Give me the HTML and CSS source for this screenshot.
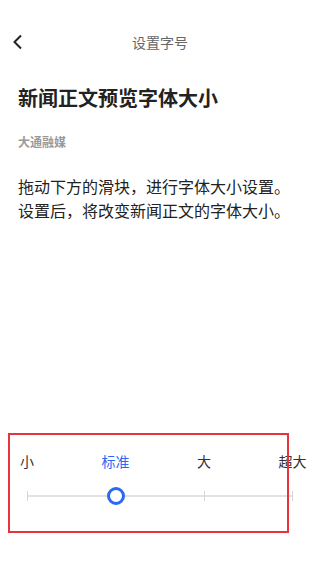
FILE: index.html
```html
<!DOCTYPE html>
<html lang="zh">
<head>
    <meta charset="utf-8">
    <link rel="stylesheet" href="styles.css">
</head>
<body>
<div class="page">
    <div class="topbar">
        <span class="back">
            <svg width="12" height="16" viewBox="0 0 12 16"><path d="M9 1.5 L2.5 8 L9 14.5" fill="none" stroke="#222" stroke-width="2"/></svg>
        </span>
        <span class="toptitle">设置字号</span>
    </div>
    <div class="content">
        <h2 class="headline">新闻正文预览字体大小</h2>
        <div class="source">大通融媒</div>
        <p class="bodytext">拖动下方的滑块，进行字体大小设置。<br>设置后，将改变新闻正文的字体大小。</p>
    </div>
    <div class="sizer">
        <div class="labels">
            <span>小</span>
            <span class="active">标准</span>
            <span>大</span>
            <span>超大</span>
        </div>
        <div class="track">
            <div class="line"></div>
            <i class="tick t0"></i>
            <i class="tick t1"></i>
            <i class="tick t2"></i>
            <i class="tick t3"></i>
            <div class="thumb"></div>
        </div>
        <div class="markbox"></div>
    </div>
</div>
</body>
</html>
```

FILE: styles.css
```css
body {
    margin: 0;
    background: #fff;
    font-family: "Noto Sans CJK SC", "Noto Sans", sans-serif;
    color: #222;
}

.page {
    width: 320px;
    height: 568px;
    overflow: hidden;
}

.topbar {
    position: relative;
    height: 84px;
    display: flex;
    align-items: center;
    justify-content: center;
}

.back {
    position: absolute;
    left: 12px;
    top: 34px;
    width: 12px;
    height: 16px;
}

.back svg {
    display: block;
}

.toptitle {
    font-size: 14px;
    color: #666;
    line-height: 20px;
}

.content {
    padding: 0 18px;
}

.headline {
    margin: 0;
    font-size: 20px;
    line-height: 28px;
    font-weight: bold;
    color: #222;
}

.source {
    margin-top: 22px;
    font-size: 12px;
    line-height: 16px;
    font-weight: bold;
    color: #999;
}

.bodytext {
    margin: 24px 0 0;
    font-size: 16px;
    line-height: 24px;
    color: #222;
}

.sizer {
    position: relative;
    margin-top: 211px;
    padding: 18px 0 0 27px;
    height: 82px;
}

.labels {
    display: grid;
    grid-template-columns: repeat(4, 88.5px);
    margin-left: -44.25px;
    font-size: 14px;
    line-height: 20px;
    color: #333;
    text-align: center;
}

.labels .active {
    color: #2c68f6;
}

.track {
    position: relative;
    margin-top: 15px;
    width: 266px;
    height: 20px;
}

.line {
    position: absolute;
    left: 0;
    right: 0;
    top: 9px;
    height: 2px;
    background: #e2e2e2;
}

.tick {
    position: absolute;
    top: 5px;
    width: 1px;
    height: 10px;
    background: #d6d6d6;
}

.t0 { left: 0; }
.t1 { left: 88px; }
.t2 { left: 177px; }
.t3 { left: 265px; }

.thumb {
    position: absolute;
    left: 80px;
    top: 1px;
    width: 12px;
    height: 12px;
    border: 3px solid #2c68f6;
    border-radius: 50%;
    background: #fff;
}

.markbox {
    position: absolute;
    left: 8px;
    top: 0;
    width: 277px;
    height: 96px;
    border: 2px solid #e8323c;
}
```
